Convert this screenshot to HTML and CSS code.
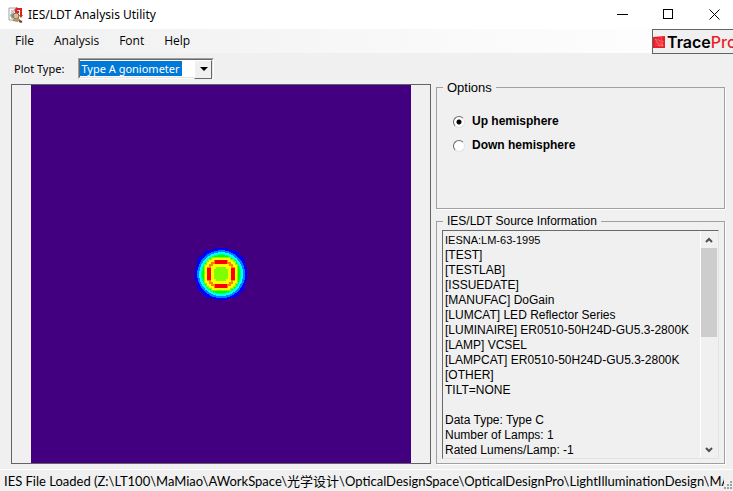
FILE: index.html
```html
<!DOCTYPE html>
<html lang="en">
<head>
<meta charset="utf-8">
<title>IES/LDT Analysis Utility</title>
<link rel="stylesheet" href="styles.css">
</head>
<body>
<header class="titlebar">
  <svg class="app-icon" viewBox="0 0 16 16" aria-hidden="true">
    <path d="M1 1h9v12H1z" fill="#fafafa" stroke="#a0a0a0"/>
    <path d="M3 4h4M3 6h3" stroke="#999"/>
    <path d="M2 8l3-2 2 3-3 3z" fill="#8c9aa5"/>
    <path d="M8 2h5v7M7 5h4" fill="none" stroke="#e02020" stroke-width="2"/>
    <path d="M9 0L6 3l3 2zM11 8h4l-2 3z" fill="#e02020"/>
    <circle cx="8" cy="9" r="3" fill="#d9bc91" stroke="#81694d"/>
    <path d="M9 11l4 4M5 13l5 1" stroke="#b28a5b" stroke-width="2"/>
    <path d="M11 14l3 1" stroke="#704a28" stroke-width="2"/>
  </svg>
  <h1>IES/LDT Analysis Utility</h1>
  <div class="window-buttons">
    <button type="button" aria-label="Minimize"><svg viewBox="0 0 11 11"><path d="M0 5.5h11"/></svg></button>
    <button type="button" aria-label="Maximize"><svg viewBox="0 0 11 11"><path d="M.5.5h9v9h-9z"/></svg></button>
    <button type="button" aria-label="Close"><svg class="smooth" viewBox="0 0 11 11"><path d="M.5.5l10 10M10.5.5l-10 10"/></svg></button>
  </div>
</header>
<div class="menubar">
  <nav>
    <button type="button">File</button>
    <button type="button">Analysis</button>
    <button type="button">Font</button>
    <button type="button">Help</button>
  </nav>
  <div class="brand">
    <svg viewBox="0 0 12 12" aria-hidden="true">
      <path d="M0 1L12 0v12H0z" fill="#ed1c2a"/>
      <path d="M2 3l8 7M2 3l9 3M2 3l5 8M5 2l5 8M2 6l8 4M8 1l2 9M2 9l8 1" stroke="#f7a3a3" stroke-width=".4"/>
    </svg>
    <span>Trace<b>Pro</b></span>
  </div>
</div>
<div class="toolbar">
  <label for="plot-type">Plot Type:</label>
  <div class="combo">
    <select id="plot-type"><option>Type A goniometer</option></select>
  </div>
</div>
<main>
  <section class="plot" aria-label="Intensity plot">
    <svg viewBox="0 0 380 378" preserveAspectRatio="none" shape-rendering="crispEdges">
      <path fill="#420080" d="M0 0h380v378H0z"/>
      <g transform="translate(190 189)">
        <path fill="#00f" d="M-7-26H7v2h8v2h3v4h4v3h2v8h2V7h-2v8h-2v3h-4v4h-3v2H7v2H-7v-2h-8v-2h-3v-4h-4v-3h-2V7h-2V-7h2v-8h2v-3h4v-4h3v-2h8z"/>
        <circle fill="#0080ff" r="24"/>
        <circle fill="#0ff" r="22"/>
        <circle fill="#00ff80" r="20"/>
        <circle fill="#0f0" r="19"/>
        <path fill="#80ff00" d="M-10-17h20v2h3v2h2v3h2v20h-2v3h-2v2h-3v2h-20v-2h-3v-2h-2v-3h-2v-20h2v-3h2v-2h3z"/>
        <path fill="#ff0" d="M-9-16H9v2h3v2h2v3h2V9h-2v3h-2v2H9v2H-9v-2h-3v-2h-2V9h-2V-9h2v-3h2v-2h3z"/>
        <path fill="#ff8000" d="M-7-14H7v2h3v2h2v3h2V7h-2v3h-2v2H7v2H-7v-2h-3v-2h-2V7h-2V-7h2v-3h2v-2h3z"/>
        <path fill="red" d="M-6-14H6v4H-6zM-6 10H6v4H-6zM-14-6h4V6h-4zM10-6h4V6h-4z"/>
        <path fill="#ff0" d="M-8-10H8v2h2V8H8v2H-8V8h-2V-8h2z"/>
        <path fill="#80ff00" d="M-5-7H5v2h2V5H5v2H-5V5h-2V-5h2z"/>
      </g>
    </svg>
  </section>
  <div class="side">
    <fieldset class="options">
      <legend>Options</legend>
      <label><input type="radio" name="hemisphere" checked> Up hemisphere</label>
      <label><input type="radio" name="hemisphere"> Down hemisphere</label>
    </fieldset>
    <fieldset class="source">
      <legend>IES/LDT Source Information</legend>
      <div class="info">
        <div class="lines" tabindex="0">
          <p class="standard">IESNA:LM-63-1995</p>
          <p>[TEST]</p>
          <p>[TESTLAB]</p>
          <p>[ISSUEDATE]</p>
          <p>[MANUFAC] DoGain</p>
          <p>[LUMCAT] LED Reflector Series</p>
          <p>[LUMINAIRE] ER0510-50H24D-GU5.3-2800K</p>
          <p>[LAMP] VCSEL</p>
          <p>[LAMPCAT] ER0510-50H24D-GU5.3-2800K</p>
          <p>[OTHER]</p>
          <p>TILT=NONE</p>
          <p></p>
          <p>Data Type: Type C</p>
          <p>Number of Lamps: 1</p>
          <p>Rated Lumens/Lamp: -1</p>
        </div>
        <div class="scrollbar">
          <button type="button" aria-label="Scroll up"><svg viewBox="0 0 8 6"><path d="M1 5l3-3 3 3"/></svg></button>
          <div class="track"><div class="thumb"></div></div>
          <button type="button" aria-label="Scroll down"><svg viewBox="0 0 8 6"><path d="M1 1l3 3 3-3"/></svg></button>
        </div>
      </div>
    </fieldset>
  </div>
</main>
<footer class="status">
  <span>IES File Loaded (Z:\LT100\MaMiao\AWorkSpace\光学设计\OpticalDesignSpace\OpticalDesignPro\LightIlluminationDesign\MA</span>
  <svg viewBox="0 0 8 8" aria-hidden="true"><path d="M6 0h2v2H6zM3 3h2v2H3zM6 3h2v2H6zM0 6h2v2H0zM3 6h2v2H3zM6 6h2v2H6z"/></svg>
</footer>
</body>
</html>
```
FILE: styles.css
```css
* { box-sizing: border-box; }
body {
  margin: 0;
  min-height: 100vh;
  display: flex;
  flex-direction: column;
  background: #f0f0f0;
  color: #000;
  font: 12px/15px "Liberation Sans", sans-serif;
  overflow: hidden;
}
button { border: 0; padding: 0; background: none; font: inherit; color: inherit; }
.titlebar {
  display: flex;
  align-items: center;
  height: 29px;
  padding-left: 8px;
  background: #fff;
}
.app-icon { width: 16px; height: 16px; margin-right: 4px; }
h1 { flex: 1; margin: 0; font: 12px/16px "Noto Sans", sans-serif; }
.window-buttons { display: flex; gap: 9px; }
.window-buttons button {
  display: grid;
  place-items: center;
  width: 37px;
  height: 28px;
}
.window-buttons svg {
  width: 11px;
  height: 11px;
  fill: none;
  stroke: #000;
  shape-rendering: crispEdges;
}
.window-buttons .smooth { shape-rendering: auto; }
.menubar {
  display: flex;
  justify-content: space-between;
  height: 24px;
  background: linear-gradient(90deg, #f0f0f0, #fff);
}
nav {
  display: flex;
  gap: 20px;
  padding-left: 15px;
  font: 12px/24px "Open Sans", sans-serif;
}
.brand {
  display: flex;
  align-items: center;
  gap: 2px;
  width: 81px;
  height: 25px;
  border: 1px solid #5f6663;
  border-right: 0;
  background: #f0f0f0;
  overflow: hidden;
  font: 600 16px/22px Inter, sans-serif;
}
.brand svg { flex: none; width: 12px; height: 12px; }
.brand b { font-weight: 500; color: #ed1c24; }
.toolbar {
  display: flex;
  align-items: center;
  gap: 14px;
  height: 31px;
  padding-left: 14px;
  font: 11px/15px "Noto Sans", sans-serif;
}
.combo {
  position: relative;
  width: 136px;
  height: 21px;
  border: 1px solid;
  border-color: #a0a0a0 #fff #fff #a0a0a0;
}
.combo select {
  display: block;
  appearance: none;
  width: 100%;
  height: 100%;
  border: 1px solid;
  border-color: #696969 #e3e3e3 #e3e3e3 #696969;
  border-radius: 0;
  padding: 0 0 0 1px;
  background: linear-gradient(#0078d7, #0078d7) 0 1px / 102px 15px no-repeat #fff;
  color: #fff;
  font: 11px/15px "Noto Sans", sans-serif;
  outline: 0;
}
.combo::after {
  content: "";
  position: absolute;
  top: 1px;
  right: 1px;
  width: 16px;
  height: 17px;
  border: 1px solid;
  border-color: #fff #696969 #696969 #fff;
  background: #f0f0f0;
  pointer-events: none;
}
.combo::before {
  content: "";
  position: absolute;
  z-index: 1;
  top: 8px;
  right: 5px;
  border: 4px solid transparent;
  border-top-color: #000;
  border-bottom: 0;
  pointer-events: none;
}
main {
  flex: 1;
  display: grid;
  grid-template-columns: 420fr 289fr;
  gap: 5px;
  padding: 0 8px 5px 11px;
}
.plot {
  display: flex;
  justify-content: center;
  border: 1px solid #646464;
}
.plot svg { display: block; width: 91%; height: 100%; }
.side { display: flex; flex-direction: column; gap: 5px; }
fieldset {
  margin: 0;
  min-width: 0;
  border: 1px solid #a0a0a0;
  box-shadow: 1px 1px #fff;
  padding: 1px 5px 4px;
}
legend { margin-left: 1px; padding: 0 4px; }
.options {
  display: flex;
  flex-direction: column;
  height: 129px;
  margin-top: -4px;
  padding-top: 19px;
  gap: 9px;
}
.options legend { font-size: 13px; }
.options label {
  display: flex;
  align-items: center;
  gap: 7px;
  padding-left: 11px;
  font-weight: bold;
}
input[type="radio"] {
  appearance: none;
  width: 12px;
  height: 12px;
  margin: 0;
  border: 1px solid;
  border-color: #696969 #e3e3e3 #e3e3e3 #696969;
  border-radius: 50%;
  background: #fff;
}
input[type="radio"]:checked {
  background: radial-gradient(circle, #000 2px, #fff 3px);
}
.source { flex: 1; display: flex; }
.info {
  flex: 1;
  display: flex;
  min-width: 0;
  border: 1px solid;
  border-color: #696969 #e3e3e3 #e3e3e3 #696969;
}
.lines { flex: 1; min-width: 0; padding: 2px 2px 0; overflow: hidden; white-space: nowrap; }
.lines p { margin: 0; min-height: 15px; }
.lines .standard { font-size: 11px; }
.scrollbar {
  display: flex;
  flex-direction: column;
  width: 17px;
  border-left: 1px solid #fff;
  margin-right: 1px;
}
.scrollbar button { height: 17px; display: grid; place-items: center; }
.scrollbar svg { width: 8px; height: 6px; fill: none; stroke: #505050; stroke-width: 2; }
.track { flex: 1; }
.thumb { height: 46%; background: #cdcdcd; }
.status {
  display: flex;
  align-items: center;
  height: 22px;
  border-top: 1px solid #fff;
  padding-left: 4px;
  font: 13px/20px Lato, "Noto Sans CJK SC", sans-serif;
}
.status span { flex: 1; overflow: hidden; white-space: nowrap; }
.status svg { width: 8px; height: 8px; align-self: flex-end; margin: 0 1px 2px 0; fill: #a0a0a0; }
```
